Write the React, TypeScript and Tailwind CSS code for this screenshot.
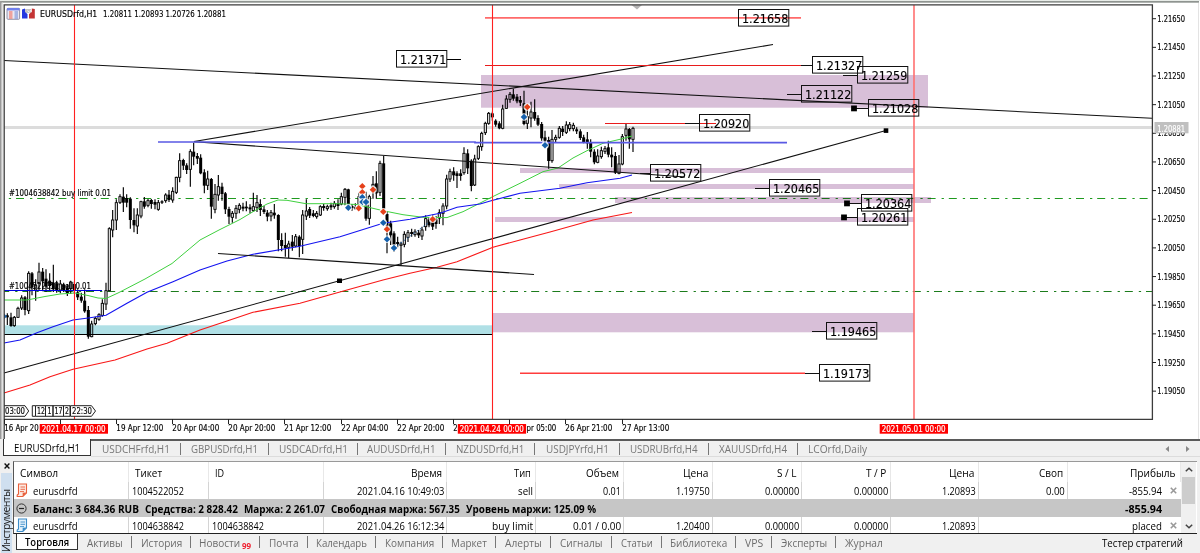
import { useLayoutEffect, useRef, useState, type ReactNode } from 'react';

/* Text squeezed horizontally to a given width. */
function Fit({ w, className = '', children }: { w: number; className?: string; children: ReactNode }) {
  const ref = useRef<HTMLSpanElement>(null);
  const [k, setK] = useState(1);
  useLayoutEffect(() => {
    if (ref.current) setK(w / ref.current.offsetWidth);
  }, [w]);
  return (
    <span className={'inline-block shrink-0 whitespace-nowrap ' + className} style={{ width: w }}>
      <span ref={ref} className="inline-block origin-left whitespace-pre" style={{ transform: `scaleX(${k})` }}>
        {children}
      </span>
    </span>
  );
}

/* Candles: centre x, high, low, body top, body bottom, rising flag; in thirds of a pixel from an origin. */
type Group = { ox: number; oy: number; d: number[][] };
const groups: Group[] = [
  {
    ox: 0, oy: 230, d: [
      [22, 250, 285, 256, 262, 0], [33, 248, 290, 262, 288, 0], [43, 258, 290, 262, 287, 1], [54, 230, 264, 235, 262, 1],
      [65, 196, 240, 204, 234, 1], [75, 198, 256, 202, 240, 0], [86, 124, 252, 130, 242, 1], [96, 126, 196, 130, 172, 0],
      [107, 148, 212, 165, 180, 1], [117, 98, 182, 126, 160, 1], [128, 114, 184, 125, 154, 0], [138, 118, 186, 146, 170, 0],
      [149, 130, 180, 152, 168, 0], [160, 104, 186, 158, 178, 0], [170, 152, 188, 160, 182, 0], [181, 150, 190, 162, 180, 1],
      [191, 158, 186, 164, 180, 0], [202, 162, 198, 172, 190, 0], [212, 152, 192, 156, 176, 1], [223, 155, 190, 162, 182, 0],
      [233, 178, 210, 187, 202, 0], [244, 188, 218, 200, 212, 0], [254, 178, 248, 212, 244, 0], [265, 228, 326, 240, 320, 0],
      [275, 272, 322, 282, 320, 1], [286, 260, 286, 265, 281, 1], [297, 250, 272, 254, 268, 1], [307, 208, 260, 220, 256, 1],
      [318, 158, 240, 182, 222, 1], [328, -8, 184, -4, 182, 1], [338, -60, 22, -30, 0, 1],
    ],
  },
  {
    ox: 0, oy: 0, d: [
      [349, 598, 690, 608, 660, 1], [360, 583, 612, 590, 607, 1], [370, 562, 636, 590, 608, 0], [380, 583, 622, 594, 608, 0],
      [391, 592, 686, 596, 660, 0], [402, 625, 697, 660, 676, 0], [412, 625, 702, 645, 678, 1], [423, 602, 655, 605, 648, 1],
      [433, 591, 626, 604, 620, 0], [444, 597, 622, 602, 616, 1], [454, 597, 626, 600, 612, 0], [465, 598, 628, 606, 614, 0],
      [475, 600, 632, 608, 628, 1], [486, 601, 612, 604, 608, 0], [497, 580, 608, 585, 602, 1], [507, 570, 606, 584, 600, 0],
      [518, 562, 608, 574, 600, 1], [529, 530, 582, 532, 577, 1], [539, 460, 547, 482, 532, 1], [550, 476, 510, 480, 497, 0],
      [560, 490, 522, 496, 510, 0], [571, 448, 560, 455, 508, 1], [581, 428, 496, 455, 470, 0], [592, 459, 492, 468, 476, 0],
      [602, 463, 523, 473, 520, 0], [613, 508, 580, 517, 557, 0], [623, 512, 570, 537, 556, 1], [634, 534, 656, 537, 620, 0],
      [645, 552, 640, 583, 628, 1], [655, 525, 602, 560, 585, 1], [666, 548, 602, 560, 582, 0], [676, 576, 642, 580, 628, 0],
      [687, 620, 672, 627, 650, 0], [697, 633, 668, 640, 652, 1], [708, 615, 656, 625, 640, 1], [718, 610, 640, 616, 628, 1],
      [729, 608, 634, 620, 626, 0], [739, 604, 634, 620, 625, 0], [750, 613, 640, 622, 628, 0], [760, 578, 636, 620, 632, 1],
      [771, 585, 636, 608, 622, 1], [781, 598, 648, 612, 630, 0], [792, 618, 642, 628, 636, 0], [802, 630, 664, 638, 650, 0],
      [813, 630, 664, 638, 648, 1], [823, 612, 656, 638, 646, 0],
    ],
  },
  {
    ox: 250, oy: 130, d: [
      [85, 253, 364, 255, 330, 0], [95, 310, 364, 330, 348, 0], [106, 308, 380, 345, 354, 0], [116, 332, 384, 342, 352, 1],
      [127, 315, 362, 335, 350, 0], [137, 312, 352, 320, 348, 1], [148, 316, 382, 320, 348, 0], [158, 240, 372, 255, 328, 1],
      [169, 208, 270, 243, 258, 1], [179, 231, 264, 237, 257, 0], [190, 240, 262, 250, 258, 0], [200, 243, 266, 250, 260, 1],
      [211, 226, 258, 230, 255, 1], [221, 222, 242, 228, 234, 0], [232, 224, 242, 230, 236, 1], [243, 218, 240, 226, 232, 0],
      [253, 213, 236, 220, 230, 1], [264, 208, 240, 220, 228, 0], [274, 188, 226, 200, 222, 1], [285, 174, 226, 178, 202, 1],
      [295, 176, 234, 178, 228, 0], [306, 222, 242, 228, 234, 0], [316, 220, 240, 232, 236, 0], [327, 188, 240, 200, 232, 1],
      [337, 180, 222, 188, 212, 0], [348, 185, 272, 206, 266, 0], [358, 194, 284, 200, 265, 1], [369, 138, 206, 163, 186, 1],
      [379, 124, 206, 160, 190, 0], [390, 92, 198, 100, 187, 1], [401, 78, 240, 100, 238, 0], [411, 244, 370, 252, 290, 0],
      [422, 272, 345, 280, 316, 0], [432, 304, 366, 310, 345, 0], [443, 320, 352, 336, 342, 0], [453, 335, 406, 342, 346, 1],
      [463, 304, 352, 313, 343, 1], [474, 300, 336, 308, 322, 1], [485, 296, 320, 306, 312, 0], [495, 298, 320, 306, 314, 1],
      [506, 300, 324, 308, 316, 0], [516, 290, 330, 300, 318, 1], [527, 256, 302, 266, 290, 1], [537, 262, 292, 268, 286, 0],
      [548, 254, 300, 270, 290, 0], [558, 258, 296, 268, 282, 0], [568, 238, 282, 248, 264, 1], [579, 220, 286, 228, 250, 1],
      [590, 134, 238, 147, 228, 1], [600, 116, 156, 125, 147, 1], [611, 112, 152, 124, 136, 0], [621, 124, 174, 130, 138, 0],
      [632, 118, 152, 130, 138, 0], [642, 52, 134, 70, 128, 1], [653, 58, 132, 70, 115, 0], [664, 88, 184, 92, 168, 0],
      [674, 74, 168, 87, 165, 1], [685, 46, 90, 50, 85, 1],
    ],
  },
  {
    ox: 420, oy: 60, d: [
      [185, 215, 272, 220, 260, 1], [196, 185, 225, 190, 218, 1], [206, 156, 194, 160, 190, 1], [217, 155, 182, 160, 172, 0],
      [227, 178, 200, 182, 194, 0], [238, 184, 208, 190, 205, 0], [248, 134, 208, 147, 205, 1], [259, 106, 147, 117, 145, 1],
      [270, 96, 128, 103, 118, 1], [280, 86, 122, 103, 116, 0], [291, 102, 130, 110, 124, 0], [301, 108, 138, 120, 128, 0],
      [312, 92, 196, 130, 192, 0], [322, 150, 207, 170, 190, 1], [333, 125, 202, 156, 174, 1], [344, 118, 182, 156, 176, 0],
      [354, 166, 198, 174, 194, 0], [365, 186, 242, 192, 235, 0], [375, 212, 248, 232, 242, 0], [386, 230, 326, 240, 303, 0],
      [396, 210, 308, 238, 302, 1], [407, 224, 248, 232, 238, 1], [418, 198, 236, 205, 232, 1], [428, 198, 228, 206, 216, 0],
      [439, 184, 222, 195, 217, 1], [449, 186, 214, 194, 206, 1], [460, 188, 214, 196, 206, 1], [470, 202, 222, 208, 214, 0],
      [481, 208, 240, 214, 234, 0], [491, 224, 250, 232, 246, 0], [502, 216, 266, 238, 250, 0], [512, 238, 292, 248, 275, 0],
      [523, 268, 313, 275, 307, 0], [533, 268, 310, 288, 307, 1], [544, 260, 296, 272, 290, 1], [555, 258, 282, 266, 274, 1],
      [565, 242, 292, 262, 284, 0], [575, 262, 322, 284, 292, 0], [586, 276, 342, 288, 338, 0], [597, 285, 343, 312, 340, 1],
      [607, 222, 316, 230, 312, 1], [618, 190, 242, 207, 226, 1], [628, 204, 266, 207, 238, 0], [639, 200, 276, 205, 238, 1],
    ],
  },
];

const green = '4,300 27,300 45,296.5 60,294 75,293 88,295.5 98,298 106,298.5 118,293 145,279 172,263.5 200,240 219,230 240,219.5 253,211.7 267,204 278,200 287,200.3 306,203.7 337,203.7 357,204.5 383,210.7 403,214.7 423,217.3 447,217.6 463,211.7 492,197 520,183.3 543,171.7 558,168 573,158 587,150.7 603,143.3 620,139.3 632,136';
const blue = '4,343 20,340 37,332.7 53,326.7 73,320 90,317.7 106,315.3 127,303.3 147,292.3 173,281.7 200,270 227,261 253,254.3 300,246.3 340,236.7 383,223.3 410,219.3 440,213.3 457,207.3 480,204 492,200.5 520,193.3 560,188.3 587,182.7 620,178.3 632,175';
const red = '4,393 30,385 50,376.7 73,369.3 115,360 147,349 167,343.3 200,330 227,321 253,312.3 300,303.3 347,290 383,280 410,273.3 437,267.3 457,261.7 493,247.3 520,240 550,232 593,220 632,212.5';

const sans = '"DejaVu Sans", sans-serif';

function Label({ x, y, w, s = 8, fill = '#000', children }: { x: number; y: number; w: number; s?: number; fill?: string; children: string }) {
  return (
    <text x={x} y={y} fontSize={s} fill={fill} stroke={fill} strokeWidth="0.15" fontFamily={sans} textLength={w} lengthAdjust="spacingAndGlyphs">
      {children}
    </text>
  );
}

/* price, box x, box y, leader start x, has anchor square */
const tags: [string, number, number, number, boolean][] = [
  ['1.21658', 738.5, 9.5, 738, false],
  ['1.21371', 396.5, 50.5, 0, false],
  ['1.21327', 812.5, 56.5, 801, false],
  ['1.21259', 857.5, 66.5, 843, false],
  ['1.21122', 801.5, 85.5, 787, false],
  ['1.21028', 868.5, 99.5, 854, true],
  ['1.20920', 699.5, 114.5, 685, false],
  ['1.20572', 650.5, 164.5, 640, false],
  ['1.20465', 769.5, 179.5, 755, false],
  ['1.20364', 861.5, 194.5, 847, true],
  ['1.20261', 857.5, 208.5, 844, true],
  ['1.19465', 826.5, 322.5, 812, false],
  ['1.19173', 819.5, 364.5, 805, false],
];

const zones = [
  [481, 75, 447, 32.7], [520, 168, 394, 5], [559, 184, 355, 5], [615, 197, 316, 6], [495, 217, 419, 5], [493, 313, 421, 19.3],
];

const sells = [[362.3, 186.3], [362.3, 192.3], [373, 189.7], [358.7, 208.3], [383.3, 211.7], [387, 229.3], [432.7, 219.3], [527.3, 107]];
const buys = [[348.3, 207.7], [362.3, 197.3], [362.5, 202], [366, 202], [383.3, 222.7], [387, 239.3], [394, 248], [524, 117], [545, 145.3]];

function Marker({ x, y, c }: { x: number; y: number; c: string }) {
  return (
    <g>
      <circle cx={x} cy={y} r="3.8" fill="#fff" opacity="0.85" />
      <path d={`M${x - 3.3} ${y}L${x} ${y - 3.3}L${x + 3.3} ${y}L${x} ${y + 3.3}Z`} fill={c} />
    </g>
  );
}

function DateFlag({ x, children }: { x: number; children: string }) {
  return (
    <g>
      <rect x={x} y="424" width="68.3" height="9.7" fill="#f00" />
      <Label x={x + 2} y={431.6} w={64} fill="#fff">{children}</Label>
    </g>
  );
}

function Chart() {
  const times: [number, string, number, number][] = [
    [4, '16 Apr 20', 0, 34.5], [116, '19 Apr 12:00', 0, 47], [172, '20 Apr 04:00', 0, 47], [228, '20 Apr 20:00', 0, 47], [284, '21 Apr 12:00', 0, 47],
    [341, '22 Apr 04:00', 0, 47], [397, '22 Apr 20:00', 0, 47], [453, '2', 0, 4.4], [509, 'pr 05:00', 17.3, 29.7], [565, '26 Apr 21:00', 0, 47], [622, '27 Apr 13:00', 0, 47],
  ];
  return (
    <svg width="1200" height="439" viewBox="0 0 1200 439" className="block shrink-0">
      <rect width="1200" height="439" fill="#fff" />
      <rect width="1200" height="1" fill="#e8ece8" />
      <rect y="1" width="1199" height="1.7" fill="#8f9490" />
      <rect y="1" width="1.7" height="438" fill="#999" />
      <rect x="1.7" y="2.7" width="1.3" height="436" fill="#e3e3e3" />
      <rect x="1198" y="3" width="1" height="436" fill="#e3e3e3" />

      <rect x="4" y="126" width="1148" height="3" fill="#dcdcdc" />
      <path d="M4 198.5H1152" stroke="#1f9a1f" strokeWidth="1" strokeDasharray="8 6 2.3 4.9" strokeDashoffset="9.2" />
      <path d="M4 291.5H1152" stroke="#1c7c1c" strokeWidth="1" strokeDasharray="8 6 2.3 4.9" strokeDashoffset="2.8" />
      <g>
        {groups.map((g) =>
          g.d.map(([x, h, l, t, b, up]) => {
            const cx = g.ox + x / 3;
            return (
              <g key={cx}>
                <path d={`M${cx} ${g.oy + h / 3}V${g.oy + l / 3}`} stroke="#000" strokeWidth="1.15" />
                <rect
                  x={cx - (up ? 1.1 : 1.5)}
                  y={g.oy + t / 3}
                  width={up ? 2.2 : 3}
                  height={Math.max(1, (b - t) / 3)}
                  fill={up ? '#ddd' : '#000'}
                  stroke={up ? '#000' : 'none'}
                  strokeWidth="0.9"
                />
              </g>
            );
          }),
        )}
      </g>
      <g style={{ mixBlendMode: 'multiply' }}>
        <rect x="5" y="325.3" width="487" height="9" fill="#b0e0e6" />
        {zones.map(([x, y, w, h]) => (
          <rect key={y} x={x} y={y} width={w} height={h} fill="#d8bfd8" />
        ))}
      </g>
      <path d="M4 334.5H492" stroke="#000" />
      <path d="M394 248L432 220M362 190V205" stroke="#1b62b0" strokeWidth="0.8" strokeDasharray="2 2" fill="none" />
      <g fill="none" strokeWidth="1">
        <polyline points={green} stroke="#3fd03f" />
        <polyline points={blue} stroke="#1414f0" strokeWidth="1.15" />
        <polyline points={red} stroke="#f81818" strokeWidth="1.15" />
        <path d="M4 290.5H102" stroke="#0000e0" />
        <g stroke="#111" strokeWidth="1.1">
          <path d="M4 60.5L1152 118.3" />
          <path d="M194 141.5L773 44.5" />
          <path d="M194 141.7L640 173.8L685 177" />
          <path d="M218 253.5L534 274.5" />
          <path d="M4 373L886 130.5" />
        </g>
      </g>
      <path d="M158 142H475L475 142.6H787" stroke="#5a5ae4" strokeWidth="1.7" fill="none" />
      <path d="M485 17.8H801" stroke="#ff6a6a" strokeWidth="1.8" />
      <path d="M485 65.5H801M605 123.5H716" stroke="#e81c1c" />
      <path d="M520 373.2H805" stroke="#ff3c3c" strokeWidth="1.4" />
      <path d="M74.5 5V419M492.5 5V419" stroke="#ff2020" strokeWidth="1.1" />
      <path d="M914 5V419" stroke="#ff7070" strokeWidth="1.6" />

      {sells.map(([x, y]) => <Marker key={`s${x}-${y}`} x={x} y={y} c="#e5401a" />)}
      {buys.map(([x, y]) => <Marker key={`b${x}-${y}`} x={x} y={y} c="#1560ac" />)}
      <path d="M4 313.5L7 316.5L4 319Z" fill="#1560ac" />

      <rect x="337" y="278.5" width="5" height="4.5" />
      <rect x="883.7" y="128.3" width="4.6" height="4.6" />
      <path d="M447 59.5H461" stroke="#000" />
      {tags.map(([p, x, y, lx, sq]) => (
        <g key={p}>
          {lx > 0 && <path d={`M${lx} ${y + 9}H${x}`} stroke="#111" />}
          {sq && <rect x={lx - 2.9} y={y + 6} width="5.8" height="5.8" />}
          <rect x={x} y={y} width="50.3" height="16.6" fill="none" stroke="#111" />
          <Label x={x + 3.5} y={y + 13.3} w={46.3} s={12.8}>{p}</Label>
        </g>
      ))}

      <path d="M631.5 5H642L637 9.5Z" fill="#b4b4b4" />

      <g>
        <rect x="7" y="8.3" width="12.6" height="11" rx="1" fill="#e8e8f4" stroke="#7c7c94" strokeWidth="0.8" />
        <rect x="7" y="8" width="12.6" height="2.4" fill="#7080ec" />
        <path d="M9 12H12.5M9 14H12.5M9 16H12.5M9 18H12.5" stroke="#f08c80" strokeWidth="1.3" />
        <path d="M14.5 12H18M14.5 14H18M14.5 16H18M14.5 18H18" stroke="#90a4dc" strokeWidth="1.3" />
        <path d="M25 9H31V13H25Z" fill="#c4c4c4" />
        <path d="M22 9.5L25 8.5V12L27.5 14V18.5H22Z" fill="#2438e0" />
        <path d="M34.8 9L31.8 8.5V12L29 14V18.5H34.8Z" fill="#c43434" />
        <path d="M27.5 10.5L29.5 12.5L31 10" stroke="#eee" fill="none" />
      </g>
      <Label x={40} y={16.8} w={57.3} s={8.8}>EURUSDrfd,H1</Label>
      <Label x={103} y={16.8} w={123} s={8.8}>1.20811 1.20893 1.20726 1.20881</Label>
      <Label x={9} y={195.8} w={102}>#1004638842 buy limit 0.01</Label>
      <Label x={9} y={288.8} w={82}>#1004522052 sell 0.01</Label>

      <g fill="#fff" stroke="#222" strokeWidth="1">
        <path d="M4 405.7H25L28.7 411L25 416.3H4" />
        <path d="M35.5 405.7H32.3V416.3H35.5" />
        <path d="M35.5 405.7H45.5V416.3H35.5ZM45.5 405.7H53V416.3H45.5ZM53 405.7H63.5V416.3H53ZM63.5 405.7H70V416.3H63.5Z" />
        <path d="M70.5 405.7H91.5L95.5 411L91.5 416.3H70.5Z" />
      </g>
      <Label x={5} y={414} w={20}>03:00</Label>
      <Label x={37} y={414} w={8}>12</Label>
      <Label x={47.5} y={414} w={4}>1</Label>
      <Label x={54.5} y={414} w={8}>17</Label>
      <Label x={65} y={414} w={4}>2</Label>
      <Label x={72} y={414} w={20}>22:30</Label>

      <path d="M4.2 439V4.9H1152.4V419.4H4.2" fill="none" stroke="#3c3c3c" strokeWidth="1.3" />
      {Array.from({ length: 14 }, (_, i) => (
        <g key={i}>
          <path d={`M1152 ${18.7 + i * 28.65}H1156`} stroke="#222" />
          <Label x={1157.2} y={21.7 + i * 28.65} w={28}>{(1.2165 - i * 0.002).toFixed(5)}</Label>
        </g>
      ))}
      <rect x="1154.5" y="122" width="34" height="11.3" fill="#c0c0c0" />
      <Label x={1157.2} y={131.5} w={28} fill="#fff">1.20881</Label>

      <path d="M60.5 419V424" stroke="#222" />
      {times.map(([x, t, dx, w]) => (
        <g key={x}>
          <path d={`M${x + 0.5} 419V424`} stroke="#222" />
          <Label x={x + 0.3 + dx} y={430.5} w={w}>{t}</Label>
        </g>
      ))}
      <DateFlag x={39.7}>2021.04.17 00:00</DateFlag>
      <DateFlag x={457.8}>2021.04.24 00:00</DateFlag>
      <DateFlag x={879.7}>2021.05.01 00:00</DateFlag>
    </svg>
  );
}

const chartTabs: [string, number, number][] = [
  ['USDCHFrfd,H1', 68, 90], ['GBPUSDrfd,H1', 67, 88], ['USDCADrfd,H1', 69, 89], ['AUDUSDrfd,H1', 68.5, 88],
  ['NZDUSDrfd,H1', 68.5, 89], ['USDJPYrfd,H1', 63, 85], ['USDRUBrfd,H4', 67.5, 89], ['XAUUSDrfd,H4', 68.5, 89], ['LCOrfd,Daily', 59, 78],
];
const toolTabs: [string, number, number][] = [
  ['Активы', 36, 54], ['История', 41, 59], ['Новости', 41, 69], ['Почта', 30, 48], ['Календарь', 51, 68], ['Компания', 49, 67],
  ['Маркет', 36, 53], ['Алерты', 37, 55], ['Сигналы', 42, 61], ['Статьи', 32, 50], ['Библиотека', 57, 74], ['VPS', 18, 36], ['Эксперты', 46, 64], ['Журнал', 38, 55],
];

const cols = 'grid grid-cols-[115px_80px_115px_123px_89px_88px_89px_89px_89px_88px_89px_113px]';

function OrderIcon({ c, bg }: { c: string; bg: string }) {
  return (
    <svg width="12" height="15" viewBox="0 0 12 15" className="mr-[5px] shrink-0">
      <path d="M2.5 1H10.5V10L6.8 13.5H1.2V12L2.5 11Z" fill={bg} stroke={c} strokeWidth="1.1" />
      <path d="M4.5 4H9M4.5 6.3H9M4 8.6H8" stroke={c} strokeWidth="0.9" />
      <path d="M10.5 9.6L6.6 9.8L6.8 13.7Z" fill={c} />
    </svg>
  );
}

function Row({ cells, icon, height, pending = false }: { cells: [string, number][]; icon: ReactNode; height: string; pending?: boolean }) {
  return (
    <div className={`${cols} ${height} overflow-hidden`}>
      {cells.map(([t, w], i) => {
        const border = i === 11 || (pending && i === 10) ? 'border-r border-transparent' : 'border-r border-[#d4d4d4]';
        if (i === 0)
          return (
            <div key={i} className={`flex items-center pl-[2px] ${border}`}>
              {icon}
              <Fit w={w}>{t}</Fit>
            </div>
          );
        if (i < 3)
          return (
            <div key={i} className={`flex items-center pl-[3px] ${border}`}>{t && <Fit w={w}>{t}</Fit>}</div>
          );
        if (i === 11)
          return (
            <div key={i} className="flex items-center justify-end pr-[4px]">
              <Fit w={w}>{t}</Fit>
              <svg width="7" height="7" viewBox="0 0 7 7" className="ml-[8px]">
                <path d="M0.8 0.8L6.2 6.2M6.2 0.8L0.8 6.2" stroke="#999" strokeWidth="1.6" />
              </svg>
            </div>
          );
        return (
          <div key={i} className={`flex items-center justify-end pr-[2px] ${border}`}>{t && <Fit w={w}>{t}</Fit>}</div>
        );
      })}
    </div>
  );
}

const heads: [string, number][] = [
  ['Символ', 38], ['Тикет', 27], ['ID', 9], ['Время', 31], ['Тип', 17], ['Объем', 33], ['Цена', 25], ['S / L', 20], ['T / P', 20], ['Цена', 25], ['Своп', 24.5], ['Прибыль', 46],
];

export default function App() {
  return (
    <div className="flex h-[553px] w-[1200px] flex-col overflow-hidden bg-[#f0f0f0] font-['Open_Sans','Noto_Sans',sans-serif] text-[11px] leading-none text-black">
      <Chart />

      <div className="flex h-[18px] shrink-0 pl-[3px]">
        <div className="flex h-[17px] w-[88px] items-center justify-center border-x-[1.5px] border-b-[1.5px] border-[#333] bg-white">
          <Fit w={66}>EURUSDrfd,H1</Fit>
        </div>
        <div className="flex h-[18px] flex-1 items-center border-t-2 border-b border-t-[#5a5a5a] border-b-[#dcdcdc] text-[#777]">
          {chartTabs.map(([t, w, cw], i) => (
            <div key={t} className="flex shrink-0 items-center" style={{ width: cw }}>
              <span className="flex flex-1 justify-center"><Fit w={w}>{t}</Fit></span>
              {i < 8 && <span className="h-[12px] w-px bg-[#777]" />}
            </div>
          ))}
          <div className="ml-auto flex gap-[15px] pr-[10px]">
            <svg width="5" height="6" viewBox="0 0 5 6"><path d="M4 0V6L0.5 3Z" fill="#888" /></svg>
            <svg width="5" height="6" viewBox="0 0 5 6"><path d="M1 0V6L4.5 3Z" fill="#888" /></svg>
          </div>
        </div>
      </div>

      <div className="flex h-[96px] shrink-0 pt-[4px]">
        <div className="flex w-[13px] shrink-0 flex-col items-center">
          <svg width="6" height="6" viewBox="0 0 6 6" className="mt-[2px] shrink-0">
            <path d="M0.6 0.6L5.4 5.4M5.4 0.6L0.6 5.4" stroke="#111" strokeWidth="1.4" />
          </svg>
          <div className="mt-[4px] flex w-[11px] flex-1 items-start justify-center bg-[#cfdfef] pt-[19px]">
            <div className="h-[60px] w-[11px] [writing-mode:vertical-rl]">
              <span className="block rotate-180 text-[10.5px] leading-[11px] tracking-[-0.65px] whitespace-nowrap text-[#222]">Инструменты</span>
            </div>
          </div>
        </div>

        <div className="flex min-w-0 flex-1 flex-col">
          <div className="flex h-[73px] w-[1184px] shrink-0 border-t border-b-[1.5px] border-l border-t-[#999] border-b-[#222] border-l-[#555] bg-white">
            <div className="w-[1167px] shrink-0">
              <div className={`${cols} h-[20px]`}>
                {heads.map(([t, w], i) => (
                  <div
                    key={i}
                    className={`flex items-center border-r border-[#e8e8e8] ${i < 3 ? 'justify-start pl-[6px]' : 'justify-end pr-[4px]'}`}
                  >
                    <Fit w={w}>{t}</Fit>
                  </div>
                ))}
              </div>
              <Row
                height="h-[17px]"
                icon={<OrderIcon c="#e8603c" bg="#fdeae2" />}
                cells={[['eurusdrfd', 44.5], ['1004522052', 52], ['', 0], ['2021.04.16 10:49:03', 87], ['sell', 15], ['0.01', 18], ['1.19750', 34], ['0.00000', 34.5], ['0.00000', 34.5], ['1.20893', 34], ['0.00', 19], ['-855.94', 33]]}
              />
              <div className="flex h-[18px] items-center bg-[#c6c6c6] pl-[2px] font-bold">
                <svg width="11" height="11" viewBox="0 0 11 11" className="mr-[6px] shrink-0">
                  <circle cx="5.5" cy="5.5" r="4.6" fill="none" stroke="#333" strokeWidth="1" />
                  <path d="M3 5.5H8" stroke="#222" strokeWidth="1.2" />
                </svg>
                <div className="flex gap-[6px]">
                  <Fit w={106}>Баланс: 3 684.36 RUB</Fit>
                  <Fit w={93}>Средства: 2 828.42</Fit>
                  <Fit w={81}>Маржа: 2 261.07</Fit>
                  <Fit w={129}>Свободная маржа: 567.35</Fit>
                  <Fit w={130}>Уровень маржи: 125.09 %</Fit>
                </div>
                <Fit w={37} className="mr-[19px] ml-auto">-855.94</Fit>
              </div>
              <Row
                height="h-[16px]"
                pending
                icon={<OrderIcon c="#3c8cc8" bg="#e2f1fb" />}
                cells={[['eurusdrfd', 44.5], ['1004638842', 52], ['1004638842', 52], ['2021.04.26 16:12:34', 87], ['buy limit', 41], ['0.01 / 0.00', 48], ['1.20400', 34], ['0.00000', 34.5], ['0.00000', 34.5], ['1.20893', 34], ['', 0], ['placed', 30]]}
              />
            </div>
            <div className="flex w-[15px] flex-col items-center bg-[#f0f0f0] pt-[5px] pb-[4px]">
              <svg width="8" height="5" viewBox="0 0 8 5"><path d="M0.8 4.3L4 1.2L7.2 4.3" fill="none" stroke="#444" strokeWidth="1.5" /></svg>
              <div className="mt-[5px] h-[27px] w-[13px] bg-[#cdcdcd]" />
              <svg width="8" height="5" viewBox="0 0 8 5" className="mt-auto"><path d="M0.8 0.7L4 3.8L7.2 0.7" fill="none" stroke="#444" strokeWidth="1.5" /></svg>
            </div>
          </div>

          <div className="flex h-[19px] shrink-0 items-start pl-[3px] text-[#6c6c6c]">
            <div className="flex h-[16px] w-[62px] shrink-0 items-center justify-center border-x-[1.5px] border-b-[1.5px] border-[#333] bg-white font-semibold text-black">
              <Fit w={44}>Торговля</Fit>
            </div>
            {toolTabs.map(([t, w, cw], i) => (
              <div key={t} className="flex h-[16px] shrink-0 items-center" style={{ width: cw }}>
                <span className="flex flex-1 items-center justify-center">
                  <Fit w={w}>{t}</Fit>
                  {i === 2 && <Fit w={9} className="mt-[7px] ml-[2px] text-[8px] font-bold text-[#f02030]">99</Fit>}
                </span>
                {i < 13 && <span className="h-[12px] w-px bg-[#777]" />}
              </div>
            ))}
            <div className="ml-auto flex h-[16px] items-center pr-[17px] text-black"><Fit w={81}>Тестер стратегий</Fit></div>
          </div>
        </div>
      </div>
    </div>
  );
}
